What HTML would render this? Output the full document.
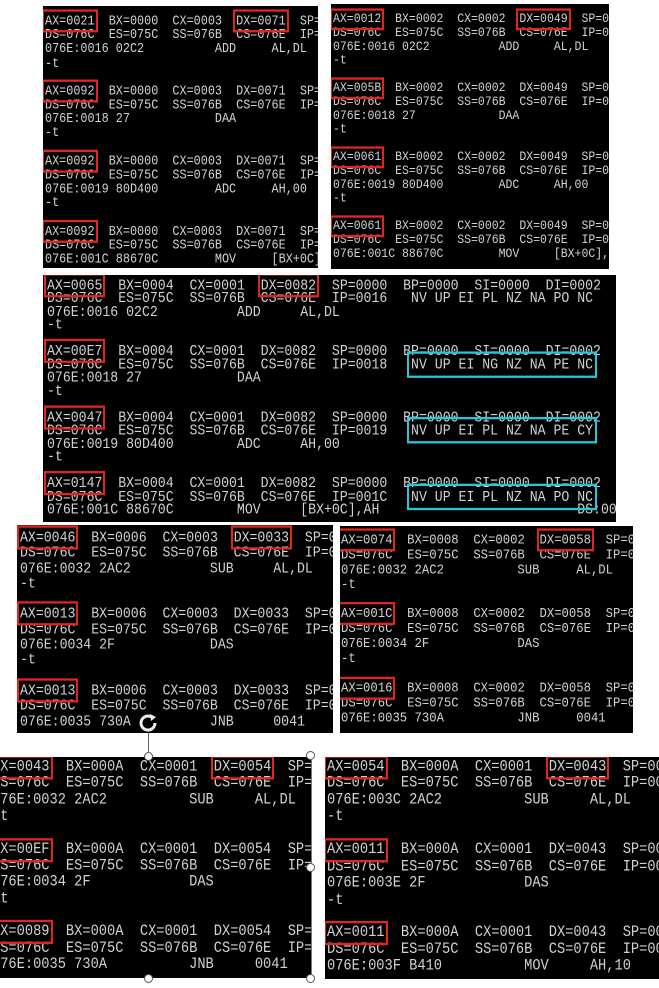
<!DOCTYPE html>
<html><head><meta charset="utf-8">
<style>
html,body{margin:0;padding:0;background:#fff;width:659px;height:988px;overflow:hidden;position:relative}
.p{position:absolute;background:#000;overflow:hidden}
.p pre{position:absolute;margin:0;font-family:"Liberation Mono",monospace;color:#d2d2d2;white-space:pre;letter-spacing:0;transform:scaleY(1.15);transform-origin:0 0}
.r{outline:2px solid #e3261d;outline-offset:1px}
.c{outline:2px solid #22c8dc;outline-offset:2px}
.h{position:absolute;width:9px;height:9px;border:1.5px solid #555;border-radius:50%;background:#fff;box-sizing:border-box}
</style></head><body>

<div class="p" style="left:43px;top:6px;width:275px;height:262px">
<pre style="left:2px;top:8px;font-size:11.8px;line-height:12.17px"><span class="r">AX=0021</span>  BX=0000  CX=0003  <span class="r">DX=0071</span>  SP=0000
DS=076C  ES=075C  SS=076B  CS=076E  IP=0016
076E:0016 02C2          ADD     AL,DL
-t

<span class="r">AX=0092</span>  BX=0000  CX=0003  DX=0071  SP=0000
DS=076C  ES=075C  SS=076B  CS=076E  IP=0018
076E:0018 27            DAA
-t

<span class="r">AX=0092</span>  BX=0000  CX=0003  DX=0071  SP=0000
DS=076C  ES=075C  SS=076B  CS=076E  IP=0019
076E:0019 80D400        ADC     AH,00
-t

<span class="r">AX=0092</span>  BX=0000  CX=0003  DX=0071  SP=0000
DS=076C  ES=075C  SS=076B  CS=076E  IP=001C
076E:001C 88670C        MOV     [BX+0C],AH</pre></div>

<div class="p" style="left:331px;top:4px;width:278px;height:265px">
<pre style="left:2px;top:9px;font-size:11.5px;line-height:12px"><span class="r">AX=0012</span>  BX=0002  CX=0002  <span class="r">DX=0049</span>  SP=0000
DS=076C  ES=075C  SS=076B  CS=076E  IP=0016
076E:0016 02C2          ADD     AL,DL
-t

<span class="r">AX=005B</span>  BX=0002  CX=0002  DX=0049  SP=0000
DS=076C  ES=075C  SS=076B  CS=076E  IP=0018
076E:0018 27            DAA
-t

<span class="r">AX=0061</span>  BX=0002  CX=0002  DX=0049  SP=0000
DS=076C  ES=075C  SS=076B  CS=076E  IP=0019
076E:0019 80D400        ADC     AH,00
-t

<span class="r">AX=0061</span>  BX=0002  CX=0002  DX=0049  SP=0000
DS=076C  ES=075C  SS=076B  CS=076E  IP=001C
076E:001C 88670C        MOV     [BX+0C],
_</pre></div>

<div class="p" style="left:43px;top:275px;width:573px;height:247px">
<pre style="left:4px;top:4px;font-size:13.2px;line-height:11.48px"><span class="r">AX=0065</span>  BX=0004  CX=0001  <span class="r">DX=0082</span>  SP=0000  BP=0000  SI=0000  DI=0002
DS=076C  ES=075C  SS=076B  CS=076E  IP=0016   NV UP EI PL NZ NA PO NC
076E:0016 02C2          ADD     AL,DL
-t

<span class="r">AX=00E7</span>  BX=0004  CX=0001  DX=0082  SP=0000  BP=0000  SI=0000  DI=0002
DS=076C  ES=075C  SS=076B  CS=076E  IP=0018   <span class="c">NV UP EI NG NZ NA PE NC</span>
076E:0018 27            DAA
-t

<span class="r">AX=0047</span>  BX=0004  CX=0001  DX=0082  SP=0000  BP=0000  SI=0000  DI=0002
DS=076C  ES=075C  SS=076B  CS=076E  IP=0019   <span class="c">NV UP EI PL NZ NA PE CY</span>
076E:0019 80D400        ADC     AH,00
-t

<span class="r">AX=0147</span>  BX=0004  CX=0001  DX=0082  SP=0000  BP=0000  SI=0000  DI=0002
DS=076C  ES=075C  SS=076B  CS=076E  IP=001C   <span class="c">NV UP EI PL NZ NA PO NC</span>
076E:001C 88670C        MOV     [BX+0C],AH                         DS:0002=00</pre></div>

<div class="p" style="left:17px;top:525px;width:316px;height:208px">
<pre style="left:3px;top:5px;font-size:13.2px;line-height:13.3px"><span class="r">AX=0046</span>  BX=0006  CX=0003  <span class="r">DX=0033</span>  SP=0000
DS=076C  ES=075C  SS=076B  CS=076E  IP=0032
076E:0032 2AC2          SUB     AL,DL
-t

<span class="r">AX=0013</span>  BX=0006  CX=0003  DX=0033  SP=0000
DS=076C  ES=075C  SS=076B  CS=076E  IP=0034
076E:0034 2F            DAS
-t

<span class="r">AX=0013</span>  BX=0006  CX=0003  DX=0033  SP=0000
DS=076C  ES=075C  SS=076B  CS=076E  IP=0035
076E:0035 730A          JNB     0041</pre></div>

<div class="p" style="left:340px;top:526px;width:293px;height:207px">
<pre style="left:1px;top:7px;font-size:12.25px;line-height:12.87px"><span class="r">AX=0074</span>  BX=0008  CX=0002  <span class="r">DX=0058</span>  SP=0000
DS=076C  ES=075C  SS=076B  CS=076E  IP=0032
076E:0032 2AC2          SUB     AL,DL
-t

<span class="r">AX=001C</span>  BX=0008  CX=0002  DX=0058  SP=0000
DS=076C  ES=075C  SS=076B  CS=076E  IP=0034
076E:0034 2F            DAS
-t

<span class="r">AX=0016</span>  BX=0008  CX=0002  DX=0058  SP=0000
DS=076C  ES=075C  SS=076B  CS=076E  IP=0035
076E:0035 730A          JNB     0041
_</pre></div>

<svg style="position:absolute;left:137px;top:712px" width="24" height="22" viewBox="0 0 24 22"><path d="M18 11a7 7 0 1 1-3-5.7" fill="none" stroke="#eee" stroke-width="3"/><path d="M13 2l6 3-5 4z" fill="#eee"/></svg>
<div style="position:absolute;left:148px;top:733px;width:1px;height:22px;background:#666"></div>

<div class="p" style="left:0px;top:757px;width:311px;height:221px;border-right:1px solid #777">
<pre style="left:-8px;top:3px;font-size:13.7px;line-height:14.35px"><span class="r">AX=0043</span>  BX=000A  CX=0001  <span class="r">DX=0054</span>  SP=0000
DS=076C  ES=075C  SS=076B  CS=076E  IP=0032
076E:0032 2AC2          SUB     AL,DL
-t

<span class="r">AX=00EF</span>  BX=000A  CX=0001  DX=0054  SP=0000
DS=076C  ES=075C  SS=076B  CS=076E  IP=0034
076E:0034 2F            DAS
-t

<span class="r">AX=0089</span>  BX=000A  CX=0001  DX=0054  SP=0000
DS=076C  ES=075C  SS=076B  CS=076E  IP=0035
076E:0035 730A          JNB     0041</pre></div>
<div class="h" style="left:144px;top:752px"></div>
<div class="h" style="left:306px;top:751px"></div>
<div class="h" style="left:306px;top:863px"></div>
<div class="h" style="left:144px;top:974px"></div>
<div class="h" style="left:306px;top:974px"></div>

<div class="p" style="left:325px;top:757px;width:334px;height:222px">
<pre style="left:2px;top:3px;font-size:13.7px;line-height:14.43px"><span class="r">AX=0054</span>  BX=000A  CX=0001  <span class="r">DX=0043</span>  SP=0000
DS=076C  ES=075C  SS=076B  CS=076E  IP=003C
076E:003C 2AC2          SUB     AL,DL
-t

<span class="r">AX=0011</span>  BX=000A  CX=0001  DX=0043  SP=0000
DS=076C  ES=075C  SS=076B  CS=076E  IP=003E
076E:003E 2F            DAS
-t

<span class="r">AX=0011</span>  BX=000A  CX=0001  DX=0043  SP=0000
DS=076C  ES=075C  SS=076B  CS=076E  IP=003F
076E:003F B410          MOV     AH,10</pre></div>

</body></html>
